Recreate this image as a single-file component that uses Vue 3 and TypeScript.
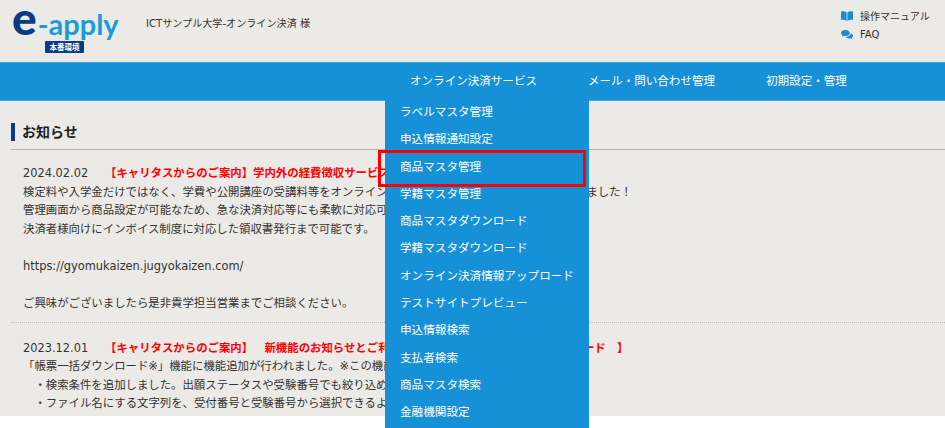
<script setup lang="ts">
const menu: string[] = [
  'ラベルマスタ管理',
  '申込情報通知設定',
  '商品マスタ管理',
  '学籍マスタ管理',
  '商品マスタダウンロード',
  '学籍マスタダウンロード',
  'オンライン決済情報アップロード',
  'テストサイトプレビュー',
  '申込情報検索',
  '支払者検索',
  '商品マスタ検索',
  '金融機関設定',
]
</script>

<template>
  <div class="page">
    <header class="top">
      <div class="brand">
        <div class="logo"><span class="e">e</span><span class="apply">-apply</span></div>
        <span class="env">本番環境</span>
      </div>
      <p class="school">ICTサンプル大学-オンライン決済 様</p>
      <ul class="links">
        <li>
          <svg width="12" height="10" viewBox="0 0 12 10"><path d="M0 0.6C2 0 4.2 0.2 5.6 1.4V10C4.2 8.9 2 8.6 0 9.1ZM12 0.6C10 0 7.8 0.2 6.4 1.4V10C7.8 8.9 10 8.6 12 9.1Z" fill="#1a8ed3"/></svg>
          <span>操作マニュアル</span>
        </li>
        <li>
          <svg width="12" height="10" viewBox="0 0 12 10"><path d="M4.4 0C6.8 0 8.8 1.3 8.8 3C8.8 4.7 6.8 6 4.4 6C3.8 6 3.3 5.9 2.8 5.8L0.8 6.8L1.3 5C0.5 4.5 0 3.8 0 3C0 1.3 2 0 4.4 0Z" fill="#1a8ed3"/><path d="M9.6 3.2C11 3.6 12 4.6 12 5.7C12 6.4 11.6 7 11 7.5L11.5 9.2L9.6 8.3C9.1 8.4 8.7 8.5 8.2 8.5C6.6 8.5 5.2 7.8 4.6 6.8C7.4 6.8 9.7 5.4 9.6 3.2Z" fill="#1a8ed3"/></svg>
          <span>FAQ</span>
        </li>
      </ul>
    </header>

    <nav class="nav">
      <div class="nav-item">
        オンライン決済サービス
        <ul class="drop">
          <li v-for="m in menu" :key="m">{{ m }}</li>
          <li class="mark" aria-hidden="true"></li>
        </ul>
      </div>
      <div class="nav-item">メール・問い合わせ管理</div>
      <div class="nav-item">初期設定・管理</div>
    </nav>

    <main class="main">
      <h2 class="title">お知らせ</h2>

      <article class="news first">
        <p class="head"><span class="date">2024.02.02</span><b>【キャリタスからのご案内】学内外の経費徴収サービス</b></p>
        <p>検定料や入学金だけではなく、学費や公開講座の受講料等をオンライ<span class="tight">ンで決済できるサービスを新たにご用意し</span>ました！</p>
        <p>管理画面から商品設定が可能なため、急な決済対応等にも柔軟に対応可能です。</p>
        <p>決済者様向けにインボイス制度に対応した領収書発行まで可能です。</p>
        <p>&nbsp;</p>
        <p>https://gyomukaizen.jugyokaizen.com/</p>
        <p>&nbsp;</p>
        <p>ご興味がございましたら是非貴学担当営業までご相談ください。</p>
      </article>

      <article class="news second">
        <p class="head"><span class="date">2023.12.01</span><b>【キャリタスからのご案内】　新機能のお知らせとご利用方法についての「帳票一括ダウンロード　】</b></p>
        <p>「帳票一括ダウンロード※」機能に機能追加が行われました。※この機能は</p>
        <p class="indent">・検索条件を追加しました。出願ステータスや受験番号でも絞り込めます。</p>
        <p class="indent">・ファイル名にする文字列を、受付番号と受験番号から選択できるようになりました。</p>
      </article>
    </main>
  </div>
</template>

<style>
html, body { margin: 0; background: #fff; overflow: hidden; }
</style>

<style scoped>
.page {
  width: 945px;
  height: 428px;
  overflow: hidden;
  font-family: "DejaVu Sans", "Noto Sans CJK JP", sans-serif;
  font-size: 11.4px;
  color: #333;
  text-spacing-trim: space-all;
}
p, ul, h2 { margin: 0; padding: 0; }
ul { list-style: none; }

.top {
  height: 62px;
  box-sizing: border-box;
  background: #ebeae6;
  display: flex;
  padding-left: 12px;
}
.brand { width: 134px; display: flex; flex-direction: column; }
.logo {
  height: 41px;
  font-family: Lato, sans-serif;
  white-space: nowrap;
  display: flex;
  align-items: baseline;
}
.e { font-size: 46px; font-weight: 900; color: #0d3a84; line-height: 36px; }
.apply { font-size: 29px; font-weight: 700; color: #1c9bd8; line-height: 36px; margin-left: 1px; }
.env {
  align-self: flex-start;
  margin-left: 33px;
  width: 39px;
  height: 12px;
  border-radius: 1px;
  background: #0d3a84;
  color: #fff;
  font-size: 7.5px;
  font-weight: 700;
  line-height: 12px;
  text-align: center;
  font-family: "Noto Sans CJK JP", sans-serif;
}
.school { font-size: 10.1px; padding-top: 17px; color: #333; line-height: 14px; }
.links { margin-left: auto; width: 104px; padding-top: 6px; font-size: 10px; color: #333; }
.links li { display: flex; align-items: center; gap: 7px; height: 19px; }

.nav {
  height: 37px;
  background: #1690d6;
  border-top: 1px solid #3ea6e2;
  border-bottom: 1px solid #3ea6e2;
  display: flex;
  gap: 51px;
  padding-left: 410px;
  color: #fff;
  font-size: 11.55px;
  line-height: 36px;
}
.nav-item { position: relative; white-space: nowrap; }
.drop {
  position: absolute;
  left: -25px;
  top: 37px;
  width: 204px;
  background: #1690d6;
  z-index: 2;
  font-size: 11.6px;
}
.drop li { height: 27.3px; line-height: 25.8px; padding-left: 15px; }
.drop .mark {
  position: absolute;
  left: -7px;
  top: 50px;
  width: 208px;
  height: 37px;
  box-sizing: border-box;
  border: 3px solid #f00;
  padding: 0;
}

.main {
  height: 315px;
  box-sizing: border-box;
  overflow: hidden;
  background: #ebeae6;
  padding: 22px 0 0 11px;
}
.title {
  border-left: 4px solid #0d3a84;
  font-size: 14px;
  font-weight: 700;
  line-height: 18px;
  padding-left: 7px;
  color: #222;
  margin-bottom: 8px;
}
.news { padding-left: 12px; line-height: 18.55px; white-space: nowrap; }
.first {
  padding-top: 13.4px;
  padding-bottom: 9px;
  border-top: 1px solid #b5b3ae;
  border-bottom: 1px dotted #bbb;
}
.second { padding-top: 15px; }
.date { display: inline-block; width: 82px; }
.head b { color: #f00; font-weight: 700; font-family: "Noto Sans CJK JP", sans-serif; }
.indent { padding-left: 11.4px; }
.tight { letter-spacing: -0.3px; }
</style>
